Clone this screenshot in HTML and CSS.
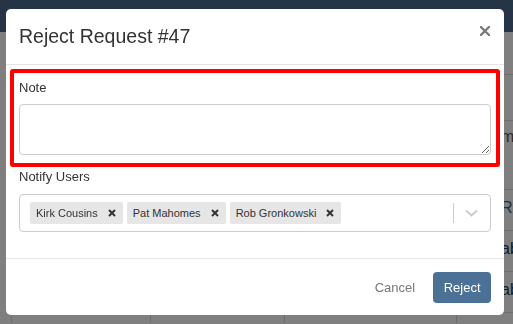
FILE: index.html
```html
<!DOCTYPE html>
<html lang="en">
<head>
    <meta charset="UTF-8">
    <meta name="viewport" content="width=device-width, initial-scale=1.0">
    <title>Reject Request #47</title>
    <link rel="stylesheet" href="styles.css">
</head>
<body>
    <div class="page">
        <div class="navbar"></div>
        <div class="table">
            <div class="row row-head"><div class="cell"></div><div class="cell"></div><div class="cell"></div><div class="cell last"></div></div>
            <div class="row row-tall"><div class="cell"></div><div class="cell"></div><div class="cell"></div><div class="cell last muted">mm</div></div>
            <div class="row"><div class="cell"></div><div class="cell"></div><div class="cell"></div><div class="cell last blue">Re</div></div>
            <div class="row"><div class="cell"></div><div class="cell"></div><div class="cell"></div><div class="cell last navy">ab</div></div>
            <div class="row"><div class="cell"></div><div class="cell"></div><div class="cell"></div><div class="cell last navy">ab</div></div>
            <div class="row row-end"><div class="cell"></div><div class="cell"></div><div class="cell"></div><div class="cell last"></div></div>
        </div>
    </div>

    <div class="backdrop"></div>

    <div class="modal">
        <div class="modal-header">
            <h4 class="modal-title">Reject Request #47</h4>
            <button class="close" type="button" aria-label="Close">
                <svg width="10" height="10" viewBox="0 0 10 10"><path d="M1 1 L9 9 M9 1 L1 9" stroke="#7a7a7a" stroke-width="2.3" stroke-linecap="square"/></svg>
            </button>
        </div>

        <div class="modal-body">
            <div class="form-group highlight">
                <label class="label">Note</label>
                <textarea class="textarea"></textarea>
            </div>

            <div class="form-group">
                <label class="label">Notify Users</label>
                <div class="select">
                    <div class="tags">
                        <span class="tag">Kirk Cousins<span class="tag-remove"><svg width="8" height="8" viewBox="0 0 8 8"><path d="M1 1 L7 7 M7 1 L1 7" stroke="#333" stroke-width="2"/></svg></span></span>
                        <span class="tag">Pat Mahomes<span class="tag-remove"><svg width="8" height="8" viewBox="0 0 8 8"><path d="M1 1 L7 7 M7 1 L1 7" stroke="#333" stroke-width="2"/></svg></span></span>
                        <span class="tag">Rob Gronkowski<span class="tag-remove"><svg width="8" height="8" viewBox="0 0 8 8"><path d="M1 1 L7 7 M7 1 L1 7" stroke="#333" stroke-width="2"/></svg></span></span>
                    </div>
                    <span class="separator"></span>
                    <span class="indicator">
                        <svg width="13" height="8" viewBox="0 0 13 8"><path d="M1 1.5 L6.5 6.5 L12 1.5" fill="none" stroke="#ccc" stroke-width="2"/></svg>
                    </span>
                </div>
            </div>
        </div>

        <div class="modal-footer">
            <button class="btn btn-link" type="button">Cancel</button>
            <button class="btn btn-primary" type="button">Reject</button>
        </div>
    </div>
</body>
</html>
```

FILE: styles.css
```css
body {
    margin: 0;
    font-family: "Liberation Sans", Arial, sans-serif;
    background-color: #fff;
    color: #333;
    overflow: hidden;
}
.page {
    height: 100vh;
    overflow: hidden;
}
.navbar {
    height: 32px;
    background-color: #4d6b8c;
}
.table {
    margin-top: 42px;
    margin-left: 11px;
}
.row {
    display: flex;
    height: 40px;
    border-top: 1px solid #dcdcdc;
}
.row-head {
    height: 45px;
}
.row-tall {
    height: 68px;
}
.row-end {
    height: 10px;
}
.cell {
    flex-shrink: 0;
    border-left: 1px solid #dcdcdc;
    width: 138px;
}
.cell:nth-child(2) {
    width: 133px;
}
.cell:nth-child(3) {
    width: 171px;
}
.cell.last {
    width: 60px;
    font-size: 16px;
    line-height: 20px;
    padding: 8px 0 0 44px;
    white-space: nowrap;
}
.row-tall .cell.last {
    padding-top: 6px;
}
.muted {
    color: #555;
}
.blue {
    color: #3d5f86;
}
.navy {
    color: #1d3756;
}
.backdrop {
    position: fixed;
    inset: 0;
    background-color: rgba(0, 0, 0, 0.5);
}
.modal {
    position: absolute;
    left: 6px;
    top: 9px;
    width: 498px;
    background-color: #fff;
    border-radius: 5px;
}
.modal-header {
    display: flex;
    justify-content: space-between;
    align-items: flex-start;
    padding: 16px 13px 17px 13px;
    border-bottom: 1px solid #e5e5e5;
}
.modal-title {
    margin: 0;
    font-size: 19.5px;
    line-height: 22px;
    font-weight: normal;
    color: #333;
}
.close {
    border: 0;
    background: none;
    padding: 0;
    margin: 1px 1px 0 0;
    line-height: 0;
}
.modal-body {
    padding: 4px 4px 26px 4px;
}
.form-group {
    padding: 1px 9px 0 9px;
}
.highlight {
    border: 4px solid #ff0000;
    border-radius: 3px;
    padding: 6px 5px 8px 5px;
}
.label {
    display: block;
    font-size: 13px;
    line-height: 18px;
    margin-bottom: 8px;
    color: #333;
}
.highlight .label {
    margin-bottom: 7px;
}
.textarea {
    display: block;
    box-sizing: border-box;
    width: 100%;
    height: 51px;
    margin: 0;
    border: 1px solid #ccc;
    border-radius: 4px;
    font-family: inherit;
}
.select {
    display: flex;
    align-items: center;
    box-sizing: border-box;
    height: 38px;
    border: 1px solid #ccc;
    border-radius: 4px;
    padding-left: 10px;
}
.tags {
    display: flex;
    gap: 4px;
    flex: 1;
}
.tag {
    display: flex;
    align-items: center;
    height: 22px;
    padding-left: 6px;
    background-color: #e6e6e6;
    border-radius: 2px;
    font-size: 11px;
    color: #333;
}
.tag-remove {
    display: flex;
    padding: 0 7px 0 10px;
}
.separator {
    width: 1px;
    height: 20px;
    background-color: #ccc;
}
.indicator {
    display: flex;
    padding: 0 12px 0 11px;
}
.modal-footer {
    display: flex;
    justify-content: flex-end;
    gap: 8px;
    padding: 13px 13px 12px 13px;
    border-top: 1px solid #e5e5e5;
}
.btn {
    height: 31px;
    border: 0;
    border-radius: 4px;
    font-family: inherit;
    font-size: 13px;
}
.btn-link {
    background: none;
    color: #777;
    padding: 0 10px;
}
.btn-primary {
    background-color: #4c7196;
    color: #fff;
    padding: 0 10.5px;
}
```
